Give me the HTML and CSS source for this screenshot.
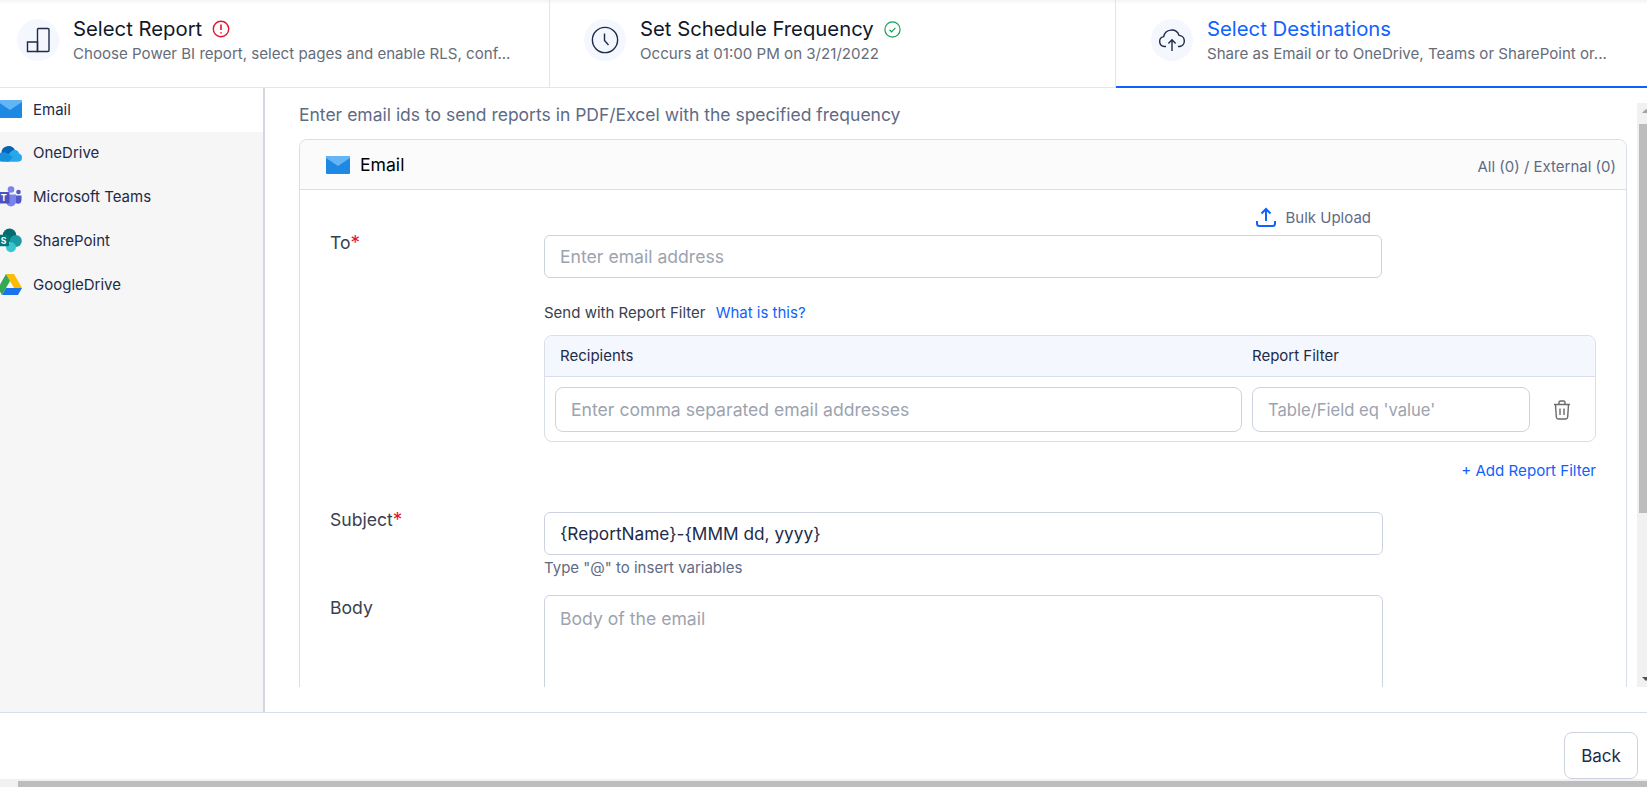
FILE: index.html
```html
<!DOCTYPE html>
<html lang="en">

<head>
  <meta charset="UTF-8">
  <meta name="viewport" content="width=device-width, initial-scale=1.0">
  <title>Select Destinations</title>
  <link rel="stylesheet" href="styles.css">
</head>

<body>
  <div class="viewport">
    <div class="page">
      <div class="tabs">
        <div class="tab">
          <div class="tab-icon">
            <svg width="24" height="26" viewBox="0 0 24 26" fill="none" stroke="#1c2b4a" stroke-width="1.4">
              <path d="M1.5 15h10v9.500h-10z" />
              <path d="M11.500 24.500V2.500q0-1 1-1h9.500q1 0 1 1v21q0 1-1 1z" />
            </svg>
          </div>
          <div class="tab-text">
            <div class="tab-title">Select Report
              <svg class="status" width="18" height="18" viewBox="0 0 18 18" fill="none" stroke="#e8112d" stroke-width="1.4">
                <circle cx="9" cy="9" r="7.7" />
                <path d="M9 4.6v5.4M9 12.2v1.2" stroke-width="1.6" />
              </svg>
            </div>
            <div class="tab-sub">Choose Power BI report, select pages and enable RLS, conf...</div>
          </div>
        </div>
        <div class="tab">
          <div class="tab-icon">
            <svg width="28" height="28" viewBox="0 0 28 28" fill="none" stroke="#1c2b4a" stroke-width="1.4">
              <circle cx="14" cy="14" r="12.6" />
              <path d="M13.500 7.500v7l4 4.500" />
            </svg>
          </div>
          <div class="tab-text">
            <div class="tab-title">Set Schedule Frequency
              <svg class="status" width="17" height="17" viewBox="0 0 17 17" fill="none" stroke="#12a150" stroke-width="1.2">
                <circle cx="8.5" cy="8.5" r="7.6" />
                <path d="M5.5 8.8l2.1 2 3.8-4" />
              </svg>
            </div>
            <div class="tab-sub">Occurs at 01:00 PM on 3/21/2022</div>
          </div>
        </div>
        <div class="tab tab-active">
          <div class="tab-icon">
            <svg width="28" height="24" viewBox="0 0 28 24" fill="none" stroke="#1c2b4a" stroke-width="1.4">
              <path d="M8 18.5H6.5a5 5 0 0 1-.8-9.9 8 8 0 0 1 15.4-1.2 5.6 5.6 0 0 1 .6 11.1H20" />
              <path d="M14 23V12M10.4 15.4L14 11.8l3.6 3.6" />
            </svg>
          </div>
          <div class="tab-text">
            <div class="tab-title">Select Destinations</div>
            <div class="tab-sub">Share as Email or to OneDrive, Teams or SharePoint or...</div>
          </div>
        </div>
      </div>

      <div class="content">
        <div class="sidebar">
          <div class="side-item selected">
            <svg class="side-icon" width="24" height="18" viewBox="0 0 24 18">
              <rect width="24" height="18" rx="1" fill="#1e88e5" />
              <path d="M0 1q0-1 1-1h22q1 0 1 1v1L12 10 0 2z" fill="#64b5f6" />
            </svg>
            Email
          </div>
          <div class="side-item">
            <svg class="side-icon" width="24" height="18" viewBox="0 0 25 18">
              <path d="M3.500 9A7.500 7.500 0 0 1 17.500 5.500L11 10.500z" fill="#0364b8" />
              <path d="M11.500 10Q14 5.500 18.500 6 21.500 7 22 9.500 25 10.500 25 14 25 18 21 18H9z" fill="#28a8ea" />
              <path d="M4 8.500Q7.500 7.500 10 9.500L15.500 13.500 11 18H4Q0 18 0 14 0 9.500 4 8.500z" fill="#1490df" />
            </svg>
            OneDrive
          </div>
          <div class="side-item">
            <svg class="side-icon" width="24" height="21" viewBox="0 0 24 21">
              <circle cx="20.500" cy="6" r="2.300" fill="#5059c9" />
              <path d="M17 9.500h6.500v5a3.500 3.500 0 0 1-6.500 1.500z" fill="#5059c9" />
              <circle cx="13" cy="3.500" r="3.300" fill="#7b83eb" />
              <path d="M8 8.500h10v7a5 5 0 0 1-10 0z" fill="#7b83eb" />
              <rect x="0" y="6" width="11.500" height="11.500" rx="1" fill="#4b53bc" />
              <text x="5.700" y="15" class="icon-letter">T</text>
            </svg>
            Microsoft Teams
          </div>
          <div class="side-item">
            <svg class="side-icon" width="24" height="25" viewBox="0 0 25 25">
              <circle cx="12" cy="7" r="7" fill="#036c70" />
              <circle cx="18.500" cy="13" r="6.300" fill="#1a9ba1" />
              <circle cx="13.500" cy="19.500" r="5.200" fill="#37c6d0" />
              <rect x="0" y="6.500" width="11.500" height="12" rx="1" fill="#03787c" />
              <text x="5.700" y="15.800" class="icon-letter">S</text>
            </svg>
            SharePoint
          </div>
          <div class="side-item">
            <svg class="side-icon" width="24" height="21" viewBox="0 0 24 21">
              <path d="M8 0h8l8 14h-8z" fill="#fbbc04" />
              <path d="M8 0l4 7-8 14-4-7z" fill="#34a853" />
              <path d="M8 14h16l-4 7H4z" fill="#1a73e8" />
            </svg>
            GoogleDrive
          </div>
        </div>

        <div class="main">
          <div class="main-scroll">
            <div class="form-area">
              <p class="intro">Enter email ids to send reports in PDF/Excel with the specified frequency</p>
              <div class="card">
                <div class="card-head">
                  <svg class="card-icon" width="24" height="18" viewBox="0 0 24 18">
                    <rect width="24" height="18" rx="1" fill="#1e88e5" />
                    <path d="M0 1q0-1 1-1h22q1 0 1 1v1L12 10 0 2z" fill="#64b5f6" />
                  </svg>
                  <span class="card-title">Email</span>
                  <span class="card-count">All (0) / External (0)</span>
                </div>
                <div class="card-body">
                  <div class="field field-to">
                    <label class="field-label">To<span class="req">*</span></label>
                    <div class="field-input">
                      <div class="bulk-row">
                        <svg width="20" height="20" viewBox="0 0 20 20" fill="none" stroke="#0f62fe" stroke-width="2">
                          <path d="M10 14V2M5.500 6.500L10 2l4.500 4.500" />
                          <path d="M1 14v2.500q0 2.500 2.500 2.500h13q2.500 0 2.500-2.500V14" />
                        </svg>
                        Bulk Upload
                      </div>
                      <input class="text-input" type="text" placeholder="Enter email address">
                    </div>
                  </div>

                  <div class="filter-note">Send with Report Filter <a class="link">What is this?</a></div>

                  <div class="filter-table">
                    <div class="filter-head">
                      <span class="col-rec">Recipients</span>
                      <span>Report Filter</span>
                    </div>
                    <div class="filter-row">
                      <input class="text-input col-rec" type="text" placeholder="Enter comma separated email addresses">
                      <input class="text-input col-val" type="text" placeholder="Table/Field eq 'value'">
                      <svg class="trash" width="18" height="20" viewBox="0 0 18 20" fill="none" stroke="#6b6b6b" stroke-width="1.4">
                        <path d="M1 4.500h16M6 4.500V2.500q0-1.500 1.500-1.500h3Q12 1 12 2.500v2M2.500 4.500l.8 12.500q.2 2 2 2h7.400q1.800 0 2-2l.8-12.500M7 8.500v6.500M11 8.500v6.500" />
                      </svg>
                    </div>
                  </div>
                  <div class="add-filter"><a class="link">+ Add Report Filter</a></div>

                  <div class="field field-subject">
                    <label class="field-label">Subject<span class="req">*</span></label>
                    <div class="field-input">
                      <input class="text-input filled" type="text" value="{ReportName}-{MMM dd, yyyy}">
                      <div class="hint">Type "@" to insert variables</div>
                    </div>
                  </div>

                  <div class="field field-body">
                    <label class="field-label">Body</label>
                    <div class="field-input">
                      <textarea class="text-input body-input" placeholder="Body of the email"></textarea>
                    </div>
                  </div>
                </div>
              </div>
            </div>
            <div class="vbar">
              <div class="arrow-up"></div>
              <div class="vthumb"></div>
              <div class="arrow-down"></div>
            </div>
          </div>
        </div>
      </div>

      <div class="footer">
        <button class="back-btn">Back</button>
      </div>
    </div>
  </div>
  <div class="hbar">
    <div class="hthumb"></div>
  </div>
</body>

</html>
```

FILE: styles.css
```css
* {
  box-sizing: border-box;
}

html,
body {
  margin: 0;
  height: 100%;
  overflow: hidden;
}

body {
  font-family: 'Inter', 'Liberation Sans', sans-serif;
  background-color: #fff;
  color: #1c2b4a;
}

/* the app is wider than the window and sits scrolled 18px to the right */
.viewport {
  height: 779px;
  overflow: hidden;
}

.page {
  width: 1672px;
  height: 779px;
  margin-left: -18px;
  display: flex;
  flex-direction: column;
}

.tabs {
  display: grid;
  grid-template-columns: 568px 566px 568px;
  height: 88px;
  flex: none;
  border-bottom: 1px solid #e2e6ec;
  background: linear-gradient(#f3f3f3, #fff 4px);
}

.tab {
  display: flex;
  align-items: flex-start;
  gap: 14px;
  padding: 19px 0 0 34px;
  border-right: 1px solid #e2e6ec;
}

.tab:first-child,
.tab-active {
  padding-left: 35px;
}

.tab-active {
  border-right: none;
  height: 88px;
  border-bottom: 2px solid #0f62fe;
}

.tab-icon {
  width: 42px;
  height: 42px;
  border-radius: 50%;
  background-color: #f4f7fd;
  display: flex;
  align-items: center;
  justify-content: center;
  flex: none;
}

.tab-title {
  font-size: 20.3px;
  line-height: 20px;
  color: #111827;
  display: flex;
  align-items: center;
  gap: 10px;
}

.tab-active .tab-title {
  color: #0f62fe;
}

.tab-sub {
  font-size: 15.1px;
  line-height: 18px;
  margin-top: 6px;
  color: #666d7a;
}

.content {
  height: 624px;
  flex: none;
  display: flex;
}

.sidebar {
  width: 283px;
  flex: none;
  background-color: #f6f6f6;
  border-right: 2px solid #d3d6dc;
}

.side-item {
  height: 44px;
  padding: 0 0 3px 16px;
  display: flex;
  align-items: center;
  font-size: 15px;
  color: #1c2b4a;
}

.side-item.selected {
  background-color: #fff;
  padding-bottom: 2px;
}

.side-icon {
  margin-right: 11px;
  flex: none;
}

.icon-letter {
  font-family: 'Inter', 'Liberation Sans', sans-serif;
  font-size: 9px;
  font-weight: 700;
  fill: #fff;
  text-anchor: middle;
}

.main {
  flex: 1;
  min-width: 0;
  padding-top: 15px;
  padding-left: 34px;
}

.main-scroll {
  height: 584px;
  display: flex;
  overflow: hidden;
}

.form-area {
  width: 1328px;
  flex: none;
}

.intro {
  margin: 0;
  font-size: 17.5px;
  line-height: 24px;
  color: #5f6b85;
}

.card {
  margin-top: 12px;
  border: 1px solid #d8dfe8;
  border-radius: 8px;
}

.card-head {
  height: 50px;
  display: flex;
  align-items: center;
  padding: 0 10px 0 26px;
  background-color: #fbfbfc;
  border-bottom: 1px solid #d8dfe8;
  border-radius: 8px 8px 0 0;
}

.card-icon {
  margin-right: 10px;
}

.card-title {
  font-size: 17.6px;
  color: #000;
}

.card-count {
  margin-left: auto;
  margin-top: 3px;
  font-size: 15px;
  color: #5f6b85;
}

.card-body {
  padding: 15px 30px 0 30px;
}

.field {
  display: flex;
}

.field-label {
  width: 214px;
  flex: none;
  font-size: 17.6px;
  line-height: 26px;
  color: #374151;
}

.field-to .field-label {
  margin-top: 25px;
}

.req {
  font-size: 19px;
  color: #e8112d;
}

.field-input {
  width: 838px;
  flex: none;
}

.field-subject .field-input,
.field-body .field-input {
  width: 839px;
}

.bulk-row {
  display: flex;
  align-items: center;
  justify-content: flex-end;
  gap: 10px;
  height: 24px;
  padding-right: 11px;
  margin-bottom: 6px;
  font-size: 15px;
  color: #5f6b85;
}

.text-input {
  display: block;
  width: 100%;
  height: 43px;
  padding: 0 15px;
  border: 1px solid #cdd2e0;
  border-radius: 6px;
  font-family: inherit;
  font-size: 17.6px;
  color: #1c2b4a;
  background-color: #fff;
  outline: none;
}

.text-input::placeholder {
  color: #9ca3af;
  opacity: 1;
}

.filled {
  font-size: 17.25px;
}

.filter-note {
  margin-top: 25px;
  margin-left: 214px;
  font-size: 15px;
  line-height: 20px;
  color: #374151;
}

.link {
  color: #0f62fe;
  margin-left: 6px;
}

.filter-table {
  margin: 12px 0 0 214px;
  border: 1px solid #d8dfe8;
  border-radius: 8px;
}

.filter-head {
  height: 41px;
  display: flex;
  align-items: center;
  padding: 0 0 2px 15px;
  font-size: 15px;
  color: #1c2b4a;
  background-color: #f4f7fd;
  border-bottom: 1px solid #d8dfe8;
  border-radius: 8px 8px 0 0;
}

.filter-head .col-rec {
  width: 692px;
}

.filter-row {
  display: flex;
  align-items: center;
  gap: 10px;
  padding: 10px 10px 9px;
}

.filter-row .text-input {
  height: 45px;
  border-radius: 8px;
}

.filter-row .col-rec {
  width: 687px;
  flex: none;
}

.filter-row .col-val {
  width: 278px;
  flex: none;
  font-size: 16.6px;
}

.trash {
  margin-left: 13px;
}

.add-filter {
  margin-top: 19px;
  text-align: right;
  font-size: 15.1px;
  line-height: 20px;
}

.field-subject {
  margin-top: 31px;
}

.hint {
  margin-top: 3px;
  font-size: 15px;
  line-height: 20px;
  color: #5f6b85;
}

.field-subject .field-label {
  margin-top: -5px;
}

.field-body {
  margin-top: 17px;
}

.body-input {
  height: 140px;
  padding-top: 12px;
  resize: none;
  line-height: 22px;
}

.vbar {
  width: 17px;
  margin-left: 10px;
  flex: none;
  background-color: #f1f1f1;
  display: flex;
  flex-direction: column;
  align-items: center;
}

.arrow-up,
.arrow-down {
  width: 0;
  height: 0;
  margin: 6px 0;
  border-left: 4px solid transparent;
  border-right: 4px solid transparent;
}

.arrow-up {
  border-bottom: 4px solid #a3a3a3;
}

.arrow-down {
  margin-top: auto;
  border-top: 4px solid #505050;
}

.vthumb {
  width: 13px;
  height: 389px;
  margin-top: 5px;
  background-color: #bdbdbd;
}

.footer {
  height: 67px;
  flex: none;
  display: flex;
  justify-content: flex-end;
  align-items: flex-end;
  padding-right: 16px;
  border-top: 1px solid #d8dfe8;
}

.back-btn {
  width: 74px;
  height: 47px;
  font-family: inherit;
  font-size: 17px;
  color: #1c2b4a;
  background-color: #fff;
  border: 1px solid #cdd2e0;
  border-radius: 8px;
  cursor: pointer;
}

.hbar {
  height: 8px;
  padding: 2px 0 0 18px;
  background-color: #f1f1f1;
}

.hthumb {
  height: 6px;
  background-color: #bdbdbd;
}
```
